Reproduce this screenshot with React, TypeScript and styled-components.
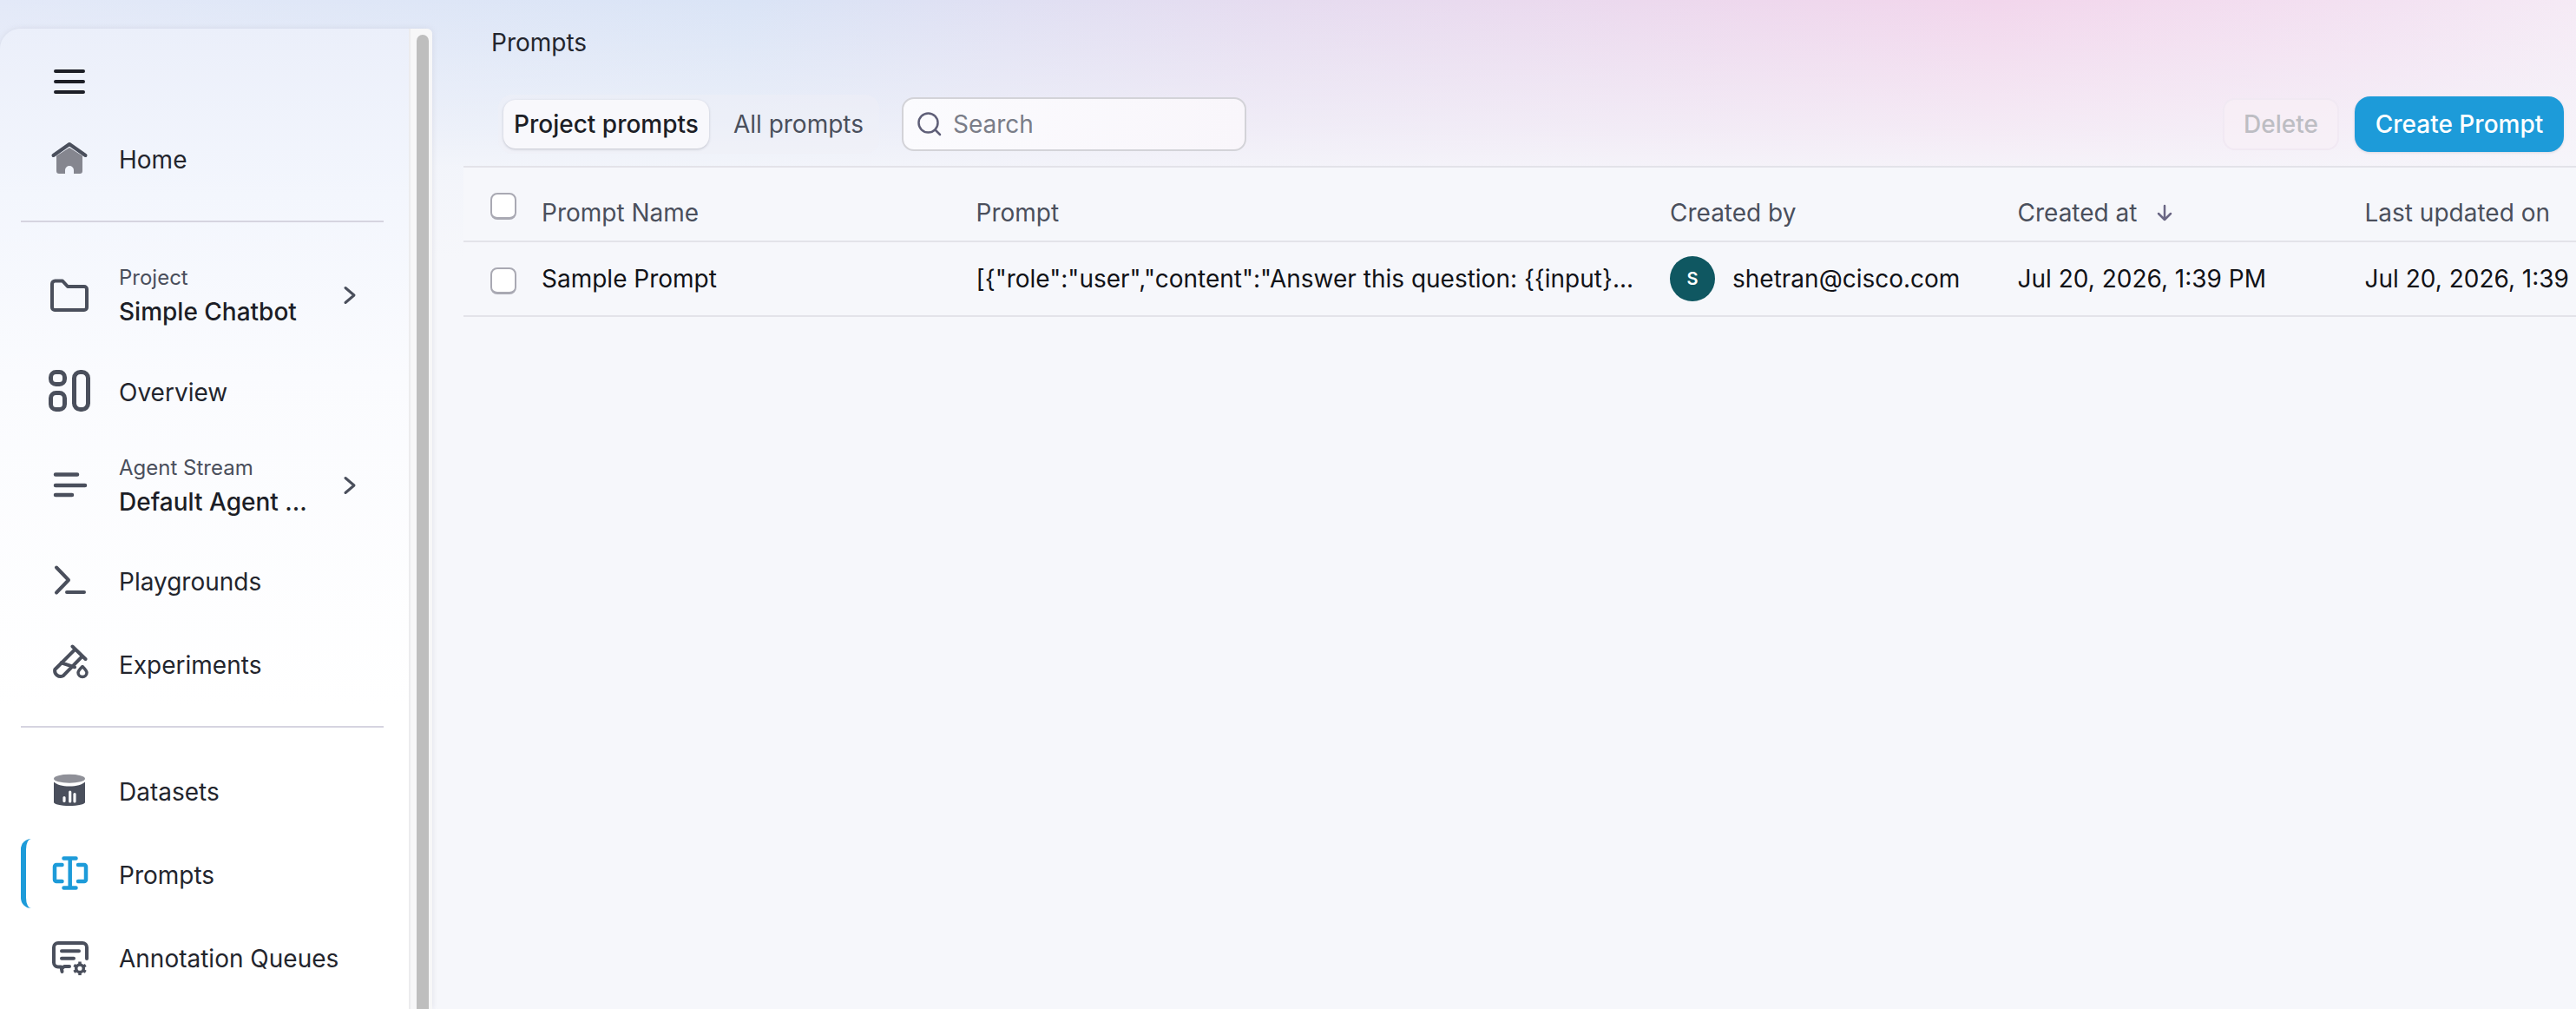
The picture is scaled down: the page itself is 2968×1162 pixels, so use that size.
import styled, { createGlobalStyle } from "styled-components";
import type { ReactNode } from "react";

const GlobalStyle = createGlobalStyle`
  html, body {
    margin: 0;
    padding: 0;
    height: 100%;
    overflow: hidden;
    background: #f6f7fb;
  }
  #root {
    height: 100%;
  }
  * {
    box-sizing: border-box;
  }
`;

const Page = styled.div`
  display: flex;
  width: 2968px;
  height: 1162px;
  overflow: hidden;
  font-family: "Inter", "Liberation Sans", sans-serif;
  font-size: 28px;
  color: #1c1e26;
  background:
    linear-gradient(180deg, rgba(246, 247, 251, 0) 0, rgba(246, 247, 251, 0.62) 150px, rgba(246, 247, 251, 0.85) 192px, #f6f7fb 300px),
    linear-gradient(95deg, #e3e9f8 0, #dae4f6 28%, #e6dcf0 48%, #f2d6ec 75%, #f3e2f2 90%, #f6eef7 100%);
`;

const SidebarFrame = styled.aside`
  flex: 0 0 498px;
  height: 1129px;
  margin-top: 33px;
  display: flex;
  border-top-left-radius: 24px;
  border-top-right-radius: 6px;
  overflow: hidden;
  background: linear-gradient(180deg, #ebeffa 0, #f3f6fd 190px, #fafbfe 400px, #ffffff 780px);
  box-shadow: 0 0 6px rgba(190, 190, 205, 0.4);
`;

const SidebarBody = styled.nav`
  flex: 1;
  padding: 47px 29px 0 24px;
`;

const Scrollbar = styled.div`
  flex: 0 0 27px;
  padding: 7px 4px 0 7px;
  background: #f7f7f8;
  border-left: 2px solid #ececee;
`;

const ScrollThumb = styled.div`
  height: 100%;
  border-radius: 8px 8px 0 0;
  background: #bebebe;
`;

const MenuButton = styled.div`
  display: flex;
  height: 28px;
  padding-left: 38px;
  margin-bottom: 40px;
`;

const NavRow = styled.div<{ $h: number; $mt?: number; $active?: boolean }>`
  position: relative;
  display: flex;
  align-items: center;
  height: ${(p) => p.$h}px;
  margin-top: ${(p) => p.$mt ?? 0}px;
  padding-left: 32px;
  ${(p) =>
    p.$active &&
    `
    &::before {
      content: "";
      position: absolute;
      left: 0;
      top: 0;
      bottom: 0;
      width: 12px;
      border-left: 6px solid #1d9bd9;
      border-radius: 12px 0 0 12px;
    }
  `}
`;

const IconSlot = styled.span`
  flex: 0 0 48px;
  display: flex;
  width: 48px;
  height: 48px;
  margin-right: 33px;
`;

const NavLabel = styled.span`
  margin-top: 3px;
  color: #23252d;
  white-space: nowrap;
  line-height: 34px;
`;

const StackedLabel = styled.div`
  flex: 1;
  display: flex;
  flex-direction: column;
  gap: 5px;
  margin-bottom: 2px;
`;

const SmallLabel = styled.span`
  font-size: 24px;
  line-height: 34px;
  color: #4a4f5c;
`;

const StrongLabel = styled.span`
  font-weight: 500;
  line-height: 34px;
  color: #1c1e26;
  white-space: nowrap;
`;

const Chevron = styled.span`
  display: flex;
  margin-right: 31px;
`;

const Divider = styled.hr<{ $top: number; $bottom: number }>`
  height: 2px;
  border: 0;
  margin: ${(p) => p.$top}px 0 ${(p) => p.$bottom}px;
  background: #d6d4e0;
`;

const Main = styled.main`
  flex: 1;
  min-width: 0;
  padding-left: 36px;
  display: flex;
  flex-direction: column;
`;

const Title = styled.h1`
  margin: 0;
  padding: 32px 0 0 32px;
  height: 109px;
  font-size: 28px;
  line-height: 34px;
  font-weight: 400;
  color: #23252d;
`;

const Toolbar = styled.div`
  display: flex;
  align-items: center;
  height: 82px;
  padding: 0 14px 14px 40px;
`;

const Tabs = styled.div`
  display: flex;
  align-items: center;
  height: 68px;
  padding: 0 18px 0 6px;
  margin-right: 26px;
  border-radius: 16px;
  background: rgba(240, 240, 246, 0.45);
`;

const Tab = styled.div<{ $active?: boolean }>`
  height: 56px;
  line-height: 56px;
  border-radius: 14px;
  margin-right: ${(p) => (p.$active ? 28 : 0)}px;
  padding: 0 ${(p) => (p.$active ? 12 : 0)}px;
  font-weight: ${(p) => (p.$active ? 500 : 400)};
  color: ${(p) => (p.$active ? "#1c1e26" : "#4a4f5c")};
  background: ${(p) => (p.$active ? "#f8f8fc" : "transparent")};
  box-shadow: ${(p) => (p.$active ? "0 1px 3px rgba(60, 60, 80, 0.25)" : "none")};
  white-space: nowrap;
`;

const SearchBox = styled.div`
  display: flex;
  align-items: center;
  gap: 12px;
  width: 397px;
  height: 62px;
  padding-left: 15px;
  border: 2px solid #d3d3d8;
  border-radius: 14px;
  background: linear-gradient(100deg, #fbfbfe, #f9f6fb);
  color: #7a7d88;
`;

const Actions = styled.div`
  margin-left: auto;
  display: flex;
  align-items: center;
  gap: 18px;
`;

const DeleteButton = styled.button`
  width: 134px;
  height: 60px;
  border: 2px solid rgba(240, 232, 242, 0.9);
  border-radius: 14px;
  background: rgba(248, 240, 247, 0.6);
  color: #bdbdc3;
  font: 500 28px "Inter", sans-serif;
`;

const CreateButton = styled.button`
  width: 241px;
  height: 64px;
  border: 0;
  border-radius: 18px;
  background: #1d9bd9;
  color: #ffffff;
  font: 500 28px "Inter", sans-serif;
  box-shadow: 0 1px 3px rgba(60, 60, 80, 0.15);
`;

const Table = styled.div`
  flex: 1;
  background: #f6f7fb;
`;

const TableRow = styled.div`
  display: grid;
  grid-template-columns: 90px 500.5px 799.5px 400.5px 400px 243px;
  align-items: center;
  height: 86px;
  border-top: 2px solid #e3e3e9;
  white-space: nowrap;
`;

const RowEnd = styled.div`
  height: 0;
  border-top: 2px solid #e3e3e9;
`;

const CheckCell = styled.div`
  padding: 5px 0 0 31px;
  display: flex;
`;

const Checkbox = styled.span`
  display: block;
  width: 30px;
  height: 31px;
  border: 2px solid #a9a9b3;
  border-bottom-width: 3px;
  border-radius: 8px;
  background: #ffffff;
`;

const HeadCell = styled.div`
  display: flex;
  align-items: center;
  gap: 23px;
  padding-top: 20px;
  color: #4a4f5c;
  overflow: hidden;
`;

const BodyCell = styled.div`
  display: flex;
  align-items: center;
  gap: 20px;
  color: #111217;
  overflow: hidden;
`;

const Avatar = styled.span`
  flex: 0 0 52px;
  display: flex;
  align-items: center;
  justify-content: center;
  height: 52px;
  border-radius: 50%;
  background: #0f5761;
  color: #ffffff;
  font-size: 20px;
  font-weight: 600;
`;

const NavIcon = ({ children }: { children: ReactNode }) => (
  <IconSlot>
    <svg width="48" height="48" viewBox="0 0 48 48" fill="none" stroke="#4a4f5c" strokeWidth="4" strokeLinecap="round" strokeLinejoin="round">
      {children}
    </svg>
  </IconSlot>
);

const ChevronRight = () => (
  <Chevron>
    <svg width="16" height="24" viewBox="0 0 16 24" fill="none" stroke="#4a4f5c" strokeWidth="3" strokeLinecap="round" strokeLinejoin="round">
      <path d="M3 3.500l10 8.500-10 8.500" />
    </svg>
  </Chevron>
);

export default function App() {
  return (
    <Page>
      <GlobalStyle />
      <SidebarFrame>
        <SidebarBody>
          <MenuButton>
            <svg width="36" height="28" viewBox="0 0 36 28" stroke="#1c1e26" strokeWidth="4" strokeLinecap="round">
              <path d="M2 2h32M2 14h32M2 26h32" />
            </svg>
          </MenuButton>
          <NavRow $h={68}>
            <NavIcon>
              <path d="M9 21.500 24 12l15 9.500V39a3 3 0 0 1-3 3h-7v-4a5 5 0 0 0-10 0v4h-7a3 3 0 0 1-3-3z" fill="#85868f" stroke="none" />
              <path d="M5.500 21 24 8l18.500 13" />
            </NavIcon>
            <NavLabel>Home</NavLabel>
          </NavRow>
          <Divider $top={38} $bottom={42} />
          <NavRow $h={84}>
            <NavIcon>
              <path d="M4 11a3.500 3.500 0 0 1 3.500-3.500h8.500l6 6.500h19a3 3 0 0 1 3 3v21a3 3 0 0 1-3 3H7a3 3 0 0 1-3-3z" />
            </NavIcon>
            <StackedLabel>
              <SmallLabel>Project</SmallLabel>
              <StrongLabel>Simple Chatbot</StrongLabel>
            </StackedLabel>
            <ChevronRight />
          </NavRow>
          <NavRow $h={68} $mt={34}>
            <NavIcon>
              <g strokeWidth="5">
                <rect x="2.500" y="2.500" width="16" height="14" rx="6" />
                <rect x="2.500" y="26.500" width="16" height="19" rx="6" />
                <rect x="29.500" y="2.500" width="16" height="43" rx="7" />
              </g>
            </NavIcon>
            <NavLabel>Overview</NavLabel>
          </NavRow>
          <NavRow $h={84} $mt={33}>
            <NavIcon>
              <path d="M8 11.500h25M8 24h34M8 35h19" strokeWidth="4.500" />
            </NavIcon>
            <StackedLabel>
              <SmallLabel>Agent Stream</SmallLabel>
              <StrongLabel>Default Agent ...</StrongLabel>
            </StackedLabel>
            <ChevronRight />
          </NavRow>
          <NavRow $h={68} $mt={33}>
            <NavIcon>
              <path d="M9 9.500 23 24 9 38.500M21 38h20" />
            </NavIcon>
            <NavLabel>Playgrounds</NavLabel>
          </NavRow>
          <NavRow $h={68} $mt={28}>
            <NavIcon>
              <path d="M27.500 4.500 42.500 19M30.700 7.700 7.300 31a6.600 6.600 0 0 0 9.400 7.300L39 15.700" />
              <path d="M14.700 23.300 30 28.300" />
              <path d="M39 27.500c3 3 5 5 5 7a5 5 0 0 1-10 0c0-2 2-4 5-7z" strokeWidth="3.500" />
            </NavIcon>
            <NavLabel>Experiments</NavLabel>
          </NavRow>
          <Divider $top={38} $bottom={38} />
          <NavRow $h={68}>
            <NavIcon>
              <ellipse cx="24" cy="10.700" rx="18" ry="5" fill="#8f9098" stroke="none" />
              <path d="M6 14.500c3 3 10 5 18 5s15-2 18-5V38c0 2-8 4-18 4S6 40 6 38z" fill="#4a4f5c" stroke="none" />
              <path d="M18 32.500v4M24.700 26v11M30 28.500v8.500" stroke="#fafbfe" strokeWidth="3.200" />
            </NavIcon>
            <NavLabel>Datasets</NavLabel>
          </NavRow>
          <NavRow $h={80} $mt={22} $active>
            <NavIcon>
              <g stroke="#1d9bd9" strokeWidth="4.500">
                <path d="M15.500 14H9a2 2 0 0 0-2 2v15a2 2 0 0 0 2 2h6.500M34 14h7a2 2 0 0 1 2 2v15a2 2 0 0 1-2 2h-7" />
                <path d="M17.500 6.500h14M24.700 6.500v34M17.500 40.500h14" />
              </g>
            </NavIcon>
            <NavLabel>Prompts</NavLabel>
          </NavRow>
          <NavRow $h={68} $mt={22}>
            <NavIcon>
              <path d="M24 35h-6l-3 2.500 .500 3.500-1-5.500H11a5 5 0 0 1-5-5V13a5 5 0 0 1 5-5h28a5 5 0 0 1 5 5v13" />
              <path d="M15 17.300h20M15 25.700h14" />
              <circle cx="36" cy="37.300" r="4.300" strokeWidth="3.500" />
              {[0, 60, 120, 180, 240, 300].map((deg) => (
                <path key={deg} d="M36 32.500v-3" strokeWidth="3.500" strokeLinecap="butt" transform={`rotate(${deg} 36 37.300)`} />
              ))}
            </NavIcon>
            <NavLabel>Annotation Queues</NavLabel>
          </NavRow>
        </SidebarBody>
        <Scrollbar>
          <ScrollThumb />
        </Scrollbar>
      </SidebarFrame>
      <Main>
        <Title>Prompts</Title>
        <Toolbar>
          <Tabs>
            <Tab $active>Project prompts</Tab>
            <Tab>All prompts</Tab>
          </Tabs>
          <SearchBox>
            <svg width="30" height="30" viewBox="0 0 30 30" fill="none" stroke="#5f5f78" strokeWidth="2.500" strokeLinecap="round">
              <circle cx="13.500" cy="13.500" r="11" />
              <path d="M21.500 21.500 27 27" />
            </svg>
            Search
          </SearchBox>
          <Actions>
            <DeleteButton>Delete</DeleteButton>
            <CreateButton>Create Prompt</CreateButton>
          </Actions>
        </Toolbar>
        <Table>
          <TableRow>
            <CheckCell>
              <Checkbox />
            </CheckCell>
            <HeadCell>Prompt Name</HeadCell>
            <HeadCell>Prompt</HeadCell>
            <HeadCell>Created by</HeadCell>
            <HeadCell>
              Created at
              <svg width="18" height="20" viewBox="0 0 18 20" fill="none" stroke="#6a6684" strokeWidth="2.500" strokeLinecap="round" strokeLinejoin="round">
                <path d="M9 2v16M2 11l7 7 7-7" />
              </svg>
            </HeadCell>
            <HeadCell>Last updated on</HeadCell>
          </TableRow>
          <TableRow>
            <CheckCell>
              <Checkbox />
            </CheckCell>
            <BodyCell>Sample Prompt</BodyCell>
            <BodyCell>{`[{"role":"user","content":"Answer this question: {{input}...`}</BodyCell>
            <BodyCell>
              <Avatar>S</Avatar>
              shetran@cisco.com
            </BodyCell>
            <BodyCell>Jul 20, 2026, 1:39 PM</BodyCell>
            <BodyCell>Jul 20, 2026, 1:39 PM</BodyCell>
          </TableRow>
          <RowEnd />
        </Table>
      </Main>
    </Page>
  );
}
